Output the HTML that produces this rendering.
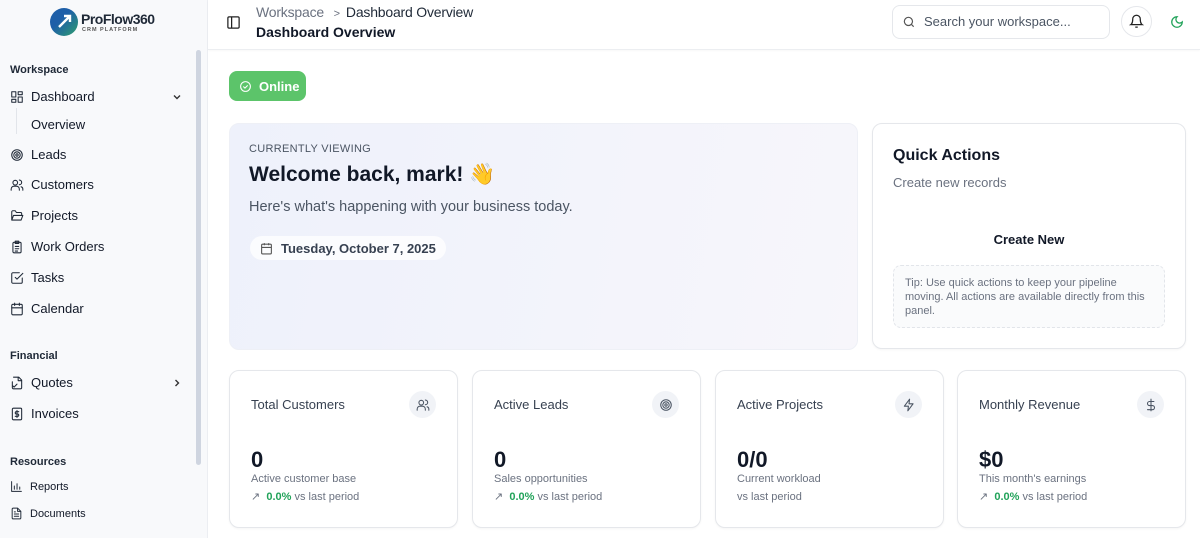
<!DOCTYPE html>
<html><head><meta charset="utf-8"><style>
*{box-sizing:border-box;margin:0;padding:0}
body{width:1200px;height:538px;overflow:hidden;font-family:"Liberation Sans",sans-serif;background:#fff;color:#111827;position:relative}
.sb{position:absolute;left:0;top:0;width:208px;height:538px;background:#f8f9fb;border-right:1px solid #eceef2}
.abs{position:absolute}
.sec{position:absolute;left:10px;font-size:11px;font-weight:bold;color:#1f2937}
.it{position:absolute;left:10px;font-size:13px;color:#111827;display:flex;align-items:center;gap:7px}
.it svg{width:14px;height:14px;fill:none;stroke:#1f2937;stroke-width:1.8;stroke-linecap:round;stroke-linejoin:round}
.card{position:absolute;border:1px solid #e5e7eb;border-radius:10px;background:#fff;box-shadow:0 1px 2px rgba(0,0,0,.04)}
.st .t{position:absolute;left:21px;top:26px;font-size:13px;color:#374151}
.st .ic{position:absolute;right:21px;top:20px;width:27px;height:27px;border-radius:50%;background:#f1f3f7;display:flex;align-items:center;justify-content:center}
.st .ic svg{width:14px;height:14px;fill:none;stroke:#4b5563;stroke-width:1.8;stroke-linecap:round;stroke-linejoin:round}
.st .v{position:absolute;left:21px;top:76px;font-size:22px;font-weight:bold}
.st .s{position:absolute;left:21px;top:102px;font-size:11px;color:#6b7280}
.st .p{position:absolute;left:21px;top:119px;font-size:11px;color:#6b7280}
.st .p b{color:#22a35a}
</style></head><body>
<div class="sb">
 <div class="abs" style="left:50px;top:8px;width:28px;height:28px;border-radius:50%;background:linear-gradient(135deg,#1e5fa8 40%,#2f9e6e)"></div>
 <svg class="abs" style="left:57px;top:13px" width="16" height="16" viewBox="0 0 16 16"><path d="M2 14 L12 4 M7 3 H13 V9" stroke="#fff" stroke-width="2.4" fill="none"/></svg>
 <div class="abs" style="left:81px;top:11px;font-size:14px;font-weight:bold;color:#1f2937;letter-spacing:-.5px">ProFlow360</div>
 <div class="abs" style="left:82px;top:27px;font-size:5.5px;font-weight:bold;color:#555;letter-spacing:1px">CRM PLATFORM</div>
 <div class="abs" style="left:196px;top:50px;width:5px;height:415px;border-radius:3px;background:#cfd5e0"></div>
 <div class="sec" style="top:64px">Workspace</div>
 <div class="it" style="top:89px"><svg viewBox="0 0 24 24"><rect x="3" y="3" width="7" height="9"/><rect x="14" y="3" width="7" height="5"/><rect x="14" y="12" width="7" height="9"/><rect x="3" y="16" width="7" height="5"/></svg>Dashboard</div>
 <svg class="abs" style="left:172px;top:92px" width="10" height="10" viewBox="0 0 10 10"><path d="M2 3.5 L5 6.5 L8 3.5" stroke="#333" stroke-width="1.4" fill="none"/></svg>
 <div class="abs" style="left:16px;top:108px;width:1px;height:26px;background:#e2e5ea"></div>
 <div class="abs" style="left:31px;top:117px;font-size:13px">Overview</div>
 <div class="it" style="top:147px"><svg viewBox="0 0 24 24"><circle cx="12" cy="12" r="9"/><circle cx="12" cy="12" r="5.5"/><circle cx="12" cy="12" r="2"/></svg>Leads</div>
 <div class="it" style="top:177px"><svg viewBox="0 0 24 24"><circle cx="9" cy="8" r="4"/><path d="M2 21v-2a5 5 0 0 1 5-5h4a5 5 0 0 1 5 5v2M16 3.5a4 4 0 0 1 0 8M22 21v-2a4 4 0 0 0-3-3.9"/></svg>Customers</div>
 <div class="it" style="top:208px"><svg viewBox="0 0 24 24"><path d="M3 19V5a2 2 0 0 1 2-2h4l2 3h7a2 2 0 0 1 2 2v2M3 19l3-8h16l-3 8z"/></svg>Projects</div>
 <div class="it" style="top:239px"><svg viewBox="0 0 24 24"><rect x="5" y="4" width="14" height="18" rx="2"/><path d="M9 2h6v4H9zM9 11h6M9 15h6M9 19h4"/></svg>Work Orders</div>
 <div class="it" style="top:270px"><svg viewBox="0 0 24 24"><path d="M21 12v7a2 2 0 0 1-2 2H5a2 2 0 0 1-2-2V5a2 2 0 0 1 2-2h11"/><path d="M9 11l3 3L22 4"/></svg>Tasks</div>
 <div class="it" style="top:301px"><svg viewBox="0 0 24 24"><rect x="3" y="4" width="18" height="18" rx="2"/><path d="M16 2v4M8 2v4M3 10h18"/></svg>Calendar</div>
 <div class="sec" style="top:350px">Financial</div>
 <div class="it" style="top:375px"><svg viewBox="0 0 24 24"><path d="M6 2h9l5 5v13a2 2 0 0 1-2 2H6a2 2 0 0 1-2-2V10M14 2v6h6M4 16l3 3 5-5"/></svg>Quotes</div>
 <svg class="abs" style="left:172px;top:378px" width="10" height="10" viewBox="0 0 10 10"><path d="M3.5 2 L6.5 5 L3.5 8" stroke="#333" stroke-width="1.4" fill="none"/></svg>
 <div class="it" style="top:406px"><svg viewBox="0 0 24 24"><rect x="4" y="2" width="16" height="20" rx="2"/><path d="M15 8h-4a2 2 0 0 0 0 4h2a2 2 0 0 1 0 4H9M12 6v12"/></svg>Invoices</div>
 <div class="sec" style="top:456px">Resources</div>
 <div class="it" style="top:480px;font-size:11px"><svg viewBox="0 0 24 24" style="width:13px;height:13px"><path d="M3 3v18h18M8 17V11M13 17V7M18 17v-4"/></svg>Reports</div>
 <div class="it" style="top:507px;font-size:11px"><svg viewBox="0 0 24 24" style="width:13px;height:13px"><path d="M14 2H6a2 2 0 0 0-2 2v16a2 2 0 0 0 2 2h12a2 2 0 0 0 2-2V8zM14 2v6h6M8 13h8M8 17h8M8 9h2"/></svg>Documents</div>
</div>
<div class="abs" style="left:208px;top:0;width:992px;height:50px;border-bottom:1px solid #eceef1;box-shadow:0 1px 2px rgba(0,0,0,.03)"></div>
<svg class="abs" style="left:226px;top:15px" width="15" height="15" viewBox="0 0 24 24" fill="none" stroke="#222" stroke-width="2"><rect x="3" y="3" width="18" height="18" rx="2"/><path d="M9 3v18"/></svg>
<div class="abs" style="left:256px;top:4px;font-size:14px;color:#6b7280;letter-spacing:-.2px">Workspace <span style="margin:0 6px;font-size:11px">&gt;</span><span style="color:#1f2937">Dashboard Overview</span></div>
<div class="abs" style="left:256px;top:24px;font-size:14px;font-weight:bold;color:#111827">Dashboard Overview</div>
<div class="abs" style="left:892px;top:5px;width:218px;height:34px;border:1px solid #e5e7eb;border-radius:8px"></div>
<svg class="abs" style="left:902px;top:15px" width="14" height="14" viewBox="0 0 24 24" fill="none" stroke="#555" stroke-width="2"><circle cx="11" cy="11" r="7"/><path d="M20 20l-4-4"/></svg>
<div class="abs" style="left:924px;top:14px;font-size:13px;color:#4b5563">Search your workspace...</div>
<div class="abs" style="left:1121px;top:6px;width:31px;height:31px;border:1px solid #e5e7eb;border-radius:50%"></div>
<svg class="abs" style="left:1129px;top:14px" width="15" height="15" viewBox="0 0 24 24" fill="none" stroke="#222" stroke-width="2"><path d="M6 8a6 6 0 0 1 12 0c0 7 3 9 3 9H3s3-2 3-9M10 21h4"/></svg>
<svg class="abs" style="left:1170px;top:15px" width="14" height="14" viewBox="0 0 24 24" fill="none" stroke="#22a35a" stroke-width="2.2"><path d="M12 3a6 6 0 0 0 9 9 9 9 0 1 1-9-9z"/></svg>
<div class="abs" style="left:229px;top:71px;width:77px;height:30px;border-radius:8px;background:#5cc46a;color:#fff;font-size:13px;font-weight:bold;display:flex;align-items:center;padding-left:10px;gap:7px"><svg width="13" height="13" viewBox="0 0 24 24" fill="none" stroke="#fff" stroke-width="2"><circle cx="12" cy="12" r="9"/><path d="M8 12l3 3 5-5"/></svg>Online</div>
<div class="abs" style="left:229px;top:123px;width:629px;height:227px;border-radius:10px;background:linear-gradient(100deg,#eef1fb,#f7f6fb);border:1px solid #eef0f6"></div>
<div class="abs" style="left:249px;top:143px;font-size:11px;color:#4b5563;letter-spacing:.3px">CURRENTLY VIEWING</div>
<div class="abs" style="left:249px;top:163px;font-size:21px;font-weight:bold;color:#111827">Welcome back, mark! 👋</div>
<div class="abs" style="left:249px;top:199px;font-size:14.5px;color:#4b5563">Here's what's happening with your business today.</div>
<div class="abs" style="left:250px;top:236px;height:24px;padding:0 10px;border-radius:12px;background:rgba(255,255,255,.75);display:flex;align-items:center;gap:8px;font-size:13px;font-weight:bold;color:#374151"><svg width="13" height="13" viewBox="0 0 24 24" fill="none" stroke="#555" stroke-width="2"><rect x="3" y="4" width="18" height="18" rx="2"/><path d="M16 2v4M8 2v4M3 10h18"/></svg>Tuesday, October 7, 2025</div>
<div class="card" style="left:872px;top:123px;width:314px;height:226px">
 <div class="abs" style="left:20px;top:23px;font-size:16px;font-weight:bold">Quick Actions</div>
 <div class="abs" style="left:20px;top:51px;font-size:13px;color:#6b7280">Create new records</div>
 <div class="abs" style="left:0;width:312px;top:108px;text-align:center;font-size:13px;font-weight:bold;color:#111827">Create New</div>
 <div class="abs" style="left:20px;top:141px;width:272px;height:63px;border:1px dashed #e2e5ea;border-radius:8px;background:#fafbfc;padding:10px 10px 0 11px;font-size:11px;line-height:14px;color:#6b7280">Tip: Use quick actions to keep your pipeline<br>moving. All actions are available directly from this panel.</div>
</div>
<div class="card st" style="left:229px;top:370px;width:229px;height:158px"><div class="t">Total Customers</div><div class="ic"><svg viewBox="0 0 24 24"><circle cx="9" cy="8" r="4"/><path d="M2 21v-2a5 5 0 0 1 5-5h4a5 5 0 0 1 5 5v2M16 3.5a4 4 0 0 1 0 8M22 21v-2a4 4 0 0 0-3-3.9"/></svg></div><div class="v">0</div><div class="s">Active customer base</div><div class="p">↗ &nbsp;<b>0.0%</b> vs last period</div></div>
<div class="card st" style="left:472px;top:370px;width:229px;height:158px"><div class="t">Active Leads</div><div class="ic"><svg viewBox="0 0 24 24"><circle cx="12" cy="12" r="9"/><circle cx="12" cy="12" r="5.5"/><circle cx="12" cy="12" r="2"/></svg></div><div class="v">0</div><div class="s">Sales opportunities</div><div class="p">↗ &nbsp;<b>0.0%</b> vs last period</div></div>
<div class="card st" style="left:715px;top:370px;width:229px;height:158px"><div class="t">Active Projects</div><div class="ic"><svg viewBox="0 0 24 24"><path d="M13 2L4 14h7l-1 8 9-12h-7z"/></svg></div><div class="v">0/0</div><div class="s">Current workload</div><div class="p" style="top:120px">vs last period</div></div>
<div class="card st" style="left:957px;top:370px;width:229px;height:158px"><div class="t">Monthly Revenue</div><div class="ic"><svg viewBox="0 0 24 24"><path d="M12 2v20M17 6H9.5a3.5 3.5 0 0 0 0 7h5a3.5 3.5 0 0 1 0 7H6"/></svg></div><div class="v">$0</div><div class="s">This month's earnings</div><div class="p">↗ &nbsp;<b>0.0%</b> vs last period</div></div>
</body></html>
